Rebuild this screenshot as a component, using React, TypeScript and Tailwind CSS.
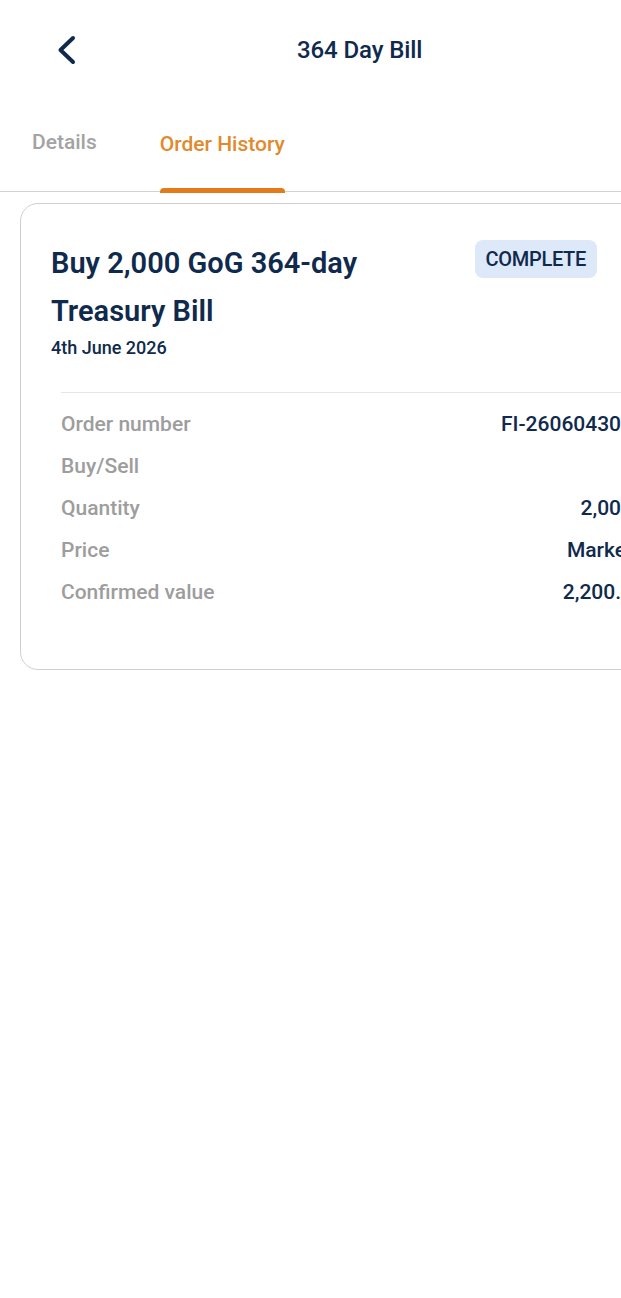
const rows = [
    { label: "Order number", value: "FI-260604301" },
    { label: "Buy/Sell", value: "" },
    { label: "Quantity", value: "2,000" },
    { label: "Price", value: "Market" },
    { label: "Confirmed value", value: "2,200.0" },
];

export default function App() {
    return (
        <div className="w-[621px] min-h-[1298px] overflow-hidden bg-white" style={{ fontFamily: "Roboto, 'Liberation Sans', sans-serif" }}>
            <div className="w-[690px]">
                {/* header */}
                <div className="flex items-center h-[100px]">
                    <button className="ml-[55px] w-[22px] h-[32px] flex items-center justify-center text-[#0f2a4c]">
                        <svg width="22" height="32" viewBox="0 0 22 32" fill="none">
                            <path d="M18 4 L5.5 16 L18 28" stroke="currentColor" strokeWidth="4" strokeLinecap="round" strokeLinejoin="round" />
                        </svg>
                    </button>
                    <div className="ml-[220px] text-[24px] font-medium text-[#0f2a4c] tracking-[-0.1px]">364 Day Bill</div>
                </div>

                {/* tabs */}
                <div className="flex items-end border-b-[1.5px] border-[#d2d2d2] h-[92px] pl-[32px] gap-[63px]">
                    <div className="flex flex-col">
                        <div className="text-[21px] leading-[28px] font-medium text-[#a3a3a3]">Details</div>
                        <div className="h-[5px] mt-[30px]" />
                    </div>
                    <div className="flex flex-col">
                        <div className="text-[21px] leading-[28px] font-medium text-[#e08a2c]">Order History</div>
                        <div className="h-[5px] mt-[30px] -mb-[1.5px] bg-[#e27b18] rounded-t-[4px]" />
                    </div>
                </div>

                {/* order card */}
                <div className="mx-[20px] mt-[11px] border border-[#cfcfcf] rounded-[18px] pt-[35px] pb-[55px]">
                    <div className="flex justify-between items-start pl-[30px] pr-[72px]">
                        <div className="w-[400px]">
                            <div className="text-[29px] leading-[48px] font-semibold text-[#0f2a4c]">
                                Buy 2,000 GoG 364-day
                                <br />
                                Treasury Bill
                            </div>
                            <div className="mt-[3px] text-[18px] leading-[20px] font-medium text-[#0f2a4c]">4th June 2026</div>
                        </div>
                        <div className="mt-[1px] h-[38px] px-[11px] flex items-center rounded-[8px] bg-[#dde8f9] text-[20px] tracking-[-0.3px] font-medium text-[#0f2a4c]">
                            COMPLETE
                        </div>
                    </div>

                    <div className="ml-[40px] mr-[36px] mt-[34px] border-t border-[#e6e6e6] pt-[11px]">
                        {rows.map((r) => (
                            <div key={r.label} className="flex justify-between items-center h-[42px] text-[21px]">
                                <span className="text-[#9d9d9d] font-medium">{r.label}</span>
                                <span className="text-[#0f2a4c] font-medium">{r.value}</span>
                            </div>
                        ))}
                    </div>
                </div>
            </div>
        </div>
    );
}
